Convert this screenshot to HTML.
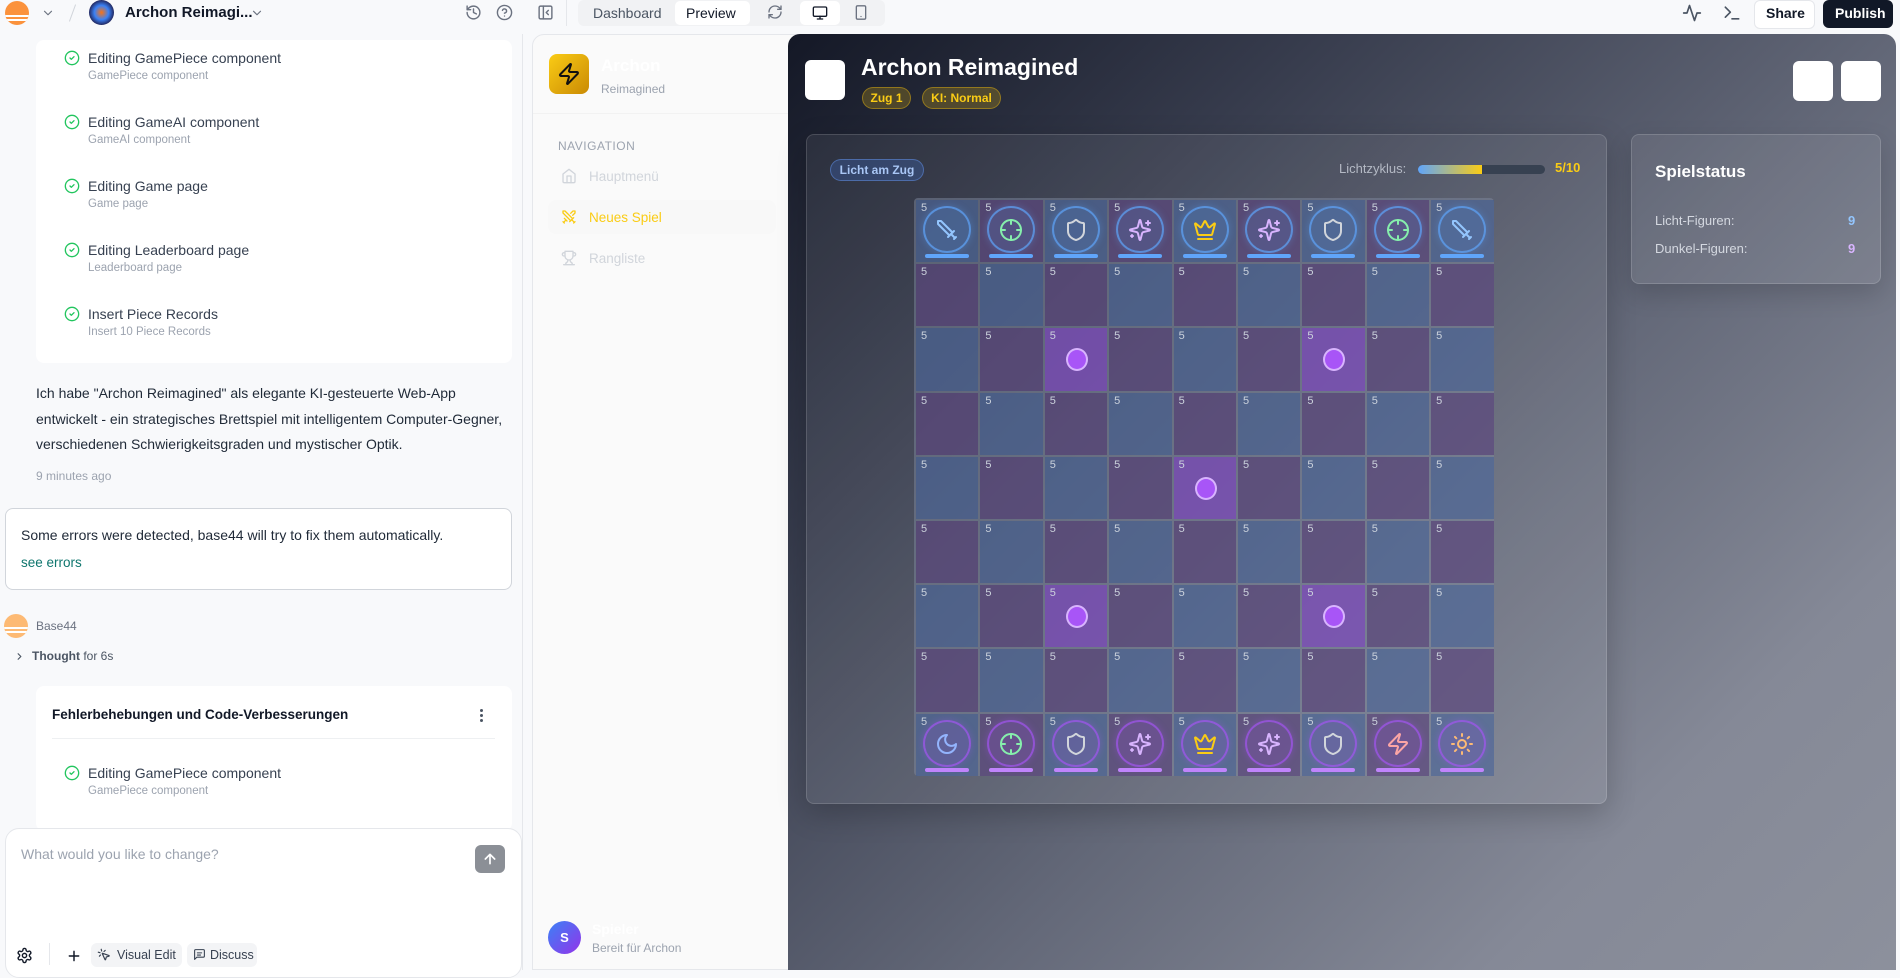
<!DOCTYPE html>
<html><head><meta charset="utf-8">
<style>
*{margin:0;padding:0;box-sizing:border-box}
body{width:1900px;height:970px;overflow:hidden;background:#f8f9fb;font-family:"Liberation Sans",sans-serif;position:relative;color:#1f2937}
.a{position:absolute}
svg{display:block}
.t{position:absolute;white-space:nowrap}
.item .t1{font-size:14px;color:#374151}
.item .t2{font-size:11.5px;color:#9ca3af}
.ic{fill:none;stroke-linecap:round;stroke-linejoin:round}
#game{left:788px;top:34px;width:1108px;height:936px;border-radius:12px 12px 0 0;background:linear-gradient(135deg,#141826 0%,#363b4c 25%,#636878 55%,#858997 80%,#8c909c 100%);overflow:hidden}
.board{position:absolute;left:914px;top:198px;width:580px;height:578px;background:rgba(125,135,158,.5);border-radius:4px;display:grid;grid-template-columns:repeat(9,62.4px);grid-template-rows:repeat(9,62.2px);gap:2px;padding:2px}
.c{position:relative;font-size:11px;color:#cbd2dc;padding:2px 0 0 5px;line-height:13px}
.b{background:rgba(35,75,150,.36)}
.p{background:rgba(70,28,105,.42)}
.h{background:rgba(125,55,200,.55)}
.dot{position:absolute;left:21px;top:20px;width:22px;height:23px;border-radius:50%;background:#a855f7;border:2px solid #d8b4fe}
.pc{position:absolute;left:7px;top:6px;width:48px;height:47px;border-radius:50%;border:2px solid rgba(96,165,250,.7);background:rgba(80,130,200,.2);box-shadow:0 0 8px rgba(96,165,250,.3)}
.pc svg{position:absolute;left:10px;top:10px}
.bar{position:absolute;left:9px;top:54px;width:44px;height:4px;border-radius:2px;background:#60a5fa}
.dk .pc{border-color:rgba(168,85,247,.65);background:rgba(140,80,200,.22);box-shadow:0 0 8px rgba(168,85,247,.3)}
.dk .bar{background:#c084fc}
</style></head><body>

<!-- top bar -->
<div class="a" style="left:5px;top:1px;width:24px;height:24px;border-radius:50%;overflow:hidden;background:#fb923c">
<div class="a" style="left:0;top:14px;width:24px;height:2px;background:#fff"></div><div class="a" style="left:0;top:18px;width:24px;height:2px;background:#fff"></div></div>
<svg class="a ic" style="left:41px;top:6px" width="14" height="14" viewBox="0 0 24 24" stroke="#6b7280" stroke-width="2"><path d="m6 9 6 6 6-6"/></svg>
<div class="a" style="left:72px;top:4px;width:1px;height:18px;background:#d1d5db;transform:rotate(20deg)"></div>
<div class="a" style="left:89px;top:0;width:25px;height:25px;border-radius:50%;background:radial-gradient(circle,#f97316 0%,#3b82f6 40%,#1e1b4b 75%)"></div>
<div class="t" style="left:125px;top:4px;font-size:15px;font-weight:bold;color:#111827">Archon Reimagi...</div>
<svg class="a ic" style="left:250px;top:6px" width="14" height="14" viewBox="0 0 24 24" stroke="#6b7280" stroke-width="2"><path d="m6 9 6 6 6-6"/></svg>
<svg class="a ic" style="left:465px;top:4px" width="17" height="17" viewBox="0 0 24 24" stroke="#6b7280" stroke-width="2"><path d="M3 12a9 9 0 1 0 9-9 9.75 9.75 0 0 0-6.74 2.74L3 8"/><path d="M3 3v5h5"/><path d="M12 7v5l4 2"/></svg>
<svg class="a ic" style="left:496px;top:4px" width="17" height="17" viewBox="0 0 24 24" stroke="#6b7280" stroke-width="2"><circle cx="12" cy="12" r="10"/><path d="M9.09 9a3 3 0 0 1 5.83 1c0 2-3 3-3 3"/><path d="M12 17h.01"/></svg>
<svg class="a ic" style="left:537px;top:4px" width="17" height="17" viewBox="0 0 24 24" stroke="#6b7280" stroke-width="2"><rect x="3" y="3" width="18" height="18" rx="2"/><path d="M9 3v18"/><path d="m16 15-3-3 3-3"/></svg>
<div class="a" style="left:566px;top:0;width:1px;height:26px;background:#e5e7eb"></div>
<div class="a" style="left:578px;top:0;width:307px;height:26px;background:#f1f2f4;border-radius:6px"></div>
<div class="t" style="left:593px;top:5px;font-size:14px;color:#4b5563">Dashboard</div>
<div class="a" style="left:675px;top:1px;width:75px;height:24px;background:#fff;border-radius:5px"></div>
<div class="t" style="left:686px;top:5px;font-size:14px;color:#111827;font-weight:500">Preview</div>
<svg class="a ic" style="left:767px;top:4px" width="16" height="16" viewBox="0 0 24 24" stroke="#6b7280" stroke-width="2"><path d="M3 12a9 9 0 0 1 9-9 9.75 9.75 0 0 1 6.74 2.74L21 8"/><path d="M21 3v5h-5"/><path d="M21 12a9 9 0 0 1-9 9 9.75 9.75 0 0 1-6.74-2.74L3 16"/><path d="M8 16H3v5"/></svg>
<div class="a" style="left:800px;top:1px;width:40px;height:24px;background:#fff;border-radius:5px"></div>
<svg class="a ic" style="left:812px;top:5px" width="16" height="16" viewBox="0 0 24 24" stroke="#111827" stroke-width="2"><rect x="2" y="3" width="20" height="14" rx="2"/><path d="M8 21h8M12 17v4"/></svg>
<svg class="a ic" style="left:853px;top:4px" width="16" height="17" viewBox="0 0 24 24" stroke="#6b7280" stroke-width="2"><rect x="5" y="2" width="14" height="20" rx="2"/><path d="M12 18h.01"/></svg>
<svg class="a ic" style="left:1682px;top:3px" width="20" height="20" viewBox="0 0 24 24" stroke="#4b5563" stroke-width="2"><path d="M22 12h-4l-3 9L9 3l-3 9H2"/></svg>
<svg class="a ic" style="left:1722px;top:3px" width="20" height="20" viewBox="0 0 24 24" stroke="#4b5563" stroke-width="2"><path d="m4 17 6-6-6-6"/><path d="M12 19h8"/></svg>
<div class="a" style="left:1754px;top:0;width:61px;height:29px;background:#fff;border:1px solid #e5e7eb;border-radius:6px"></div>
<div class="t" style="left:1766px;top:5px;font-size:14px;font-weight:bold;color:#111827">Share</div>
<div class="a" style="left:1823px;top:0;width:70px;height:28px;background:#111827;border-radius:6px"></div>
<div class="t" style="left:1835px;top:5px;font-size:14px;font-weight:bold;color:#fff">Publish</div>

<!-- left panel -->
<div class="a" style="left:522px;top:34px;width:1px;height:936px;background:#e5e7eb"></div>
<div class="a" style="left:36px;top:40px;width:476px;height:323px;background:#fff;border-radius:8px"></div>
<div class="item">
<svg class="a ic" style="left:64px;top:50px" width="16" height="16" viewBox="0 0 24 24" stroke="#22c55e" stroke-width="2"><circle cx="12" cy="12" r="10"/><path d="m9 12 2 2 4-4"/></svg>
<div class="t t1" style="left:88px;top:50px">Editing GamePiece component</div><div class="t t2" style="left:88px;top:70px">GamePiece component</div>
<svg class="a ic" style="left:64px;top:114px" width="16" height="16" viewBox="0 0 24 24" stroke="#22c55e" stroke-width="2"><circle cx="12" cy="12" r="10"/><path d="m9 12 2 2 4-4"/></svg>
<div class="t t1" style="left:88px;top:114px">Editing GameAI component</div><div class="t t2" style="left:88px;top:134px">GameAI component</div>
<svg class="a ic" style="left:64px;top:178px" width="16" height="16" viewBox="0 0 24 24" stroke="#22c55e" stroke-width="2"><circle cx="12" cy="12" r="10"/><path d="m9 12 2 2 4-4"/></svg>
<div class="t t1" style="left:88px;top:178px">Editing Game page</div><div class="t t2" style="left:88px;top:198px">Game page</div>
<svg class="a ic" style="left:64px;top:242px" width="16" height="16" viewBox="0 0 24 24" stroke="#22c55e" stroke-width="2"><circle cx="12" cy="12" r="10"/><path d="m9 12 2 2 4-4"/></svg>
<div class="t t1" style="left:88px;top:242px">Editing Leaderboard page</div><div class="t t2" style="left:88px;top:262px">Leaderboard page</div>
<svg class="a ic" style="left:64px;top:306px" width="16" height="16" viewBox="0 0 24 24" stroke="#22c55e" stroke-width="2"><circle cx="12" cy="12" r="10"/><path d="m9 12 2 2 4-4"/></svg>
<div class="t t1" style="left:88px;top:306px">Insert Piece Records</div><div class="t t2" style="left:88px;top:326px">Insert 10 Piece Records</div>
</div>
<div class="a" style="left:36px;top:381px;width:480px;font-size:14px;line-height:25.5px;color:#1f2937">Ich habe "Archon Reimagined" als elegante KI-gesteuerte Web-App entwickelt - ein strategisches Brettspiel mit intelligentem Computer-Gegner, verschiedenen Schwierigkeitsgraden und mystischer Optik.</div>
<div class="t" style="left:36px;top:469px;font-size:12px;color:#9ca3af">9 minutes ago</div>
<div class="a" style="left:5px;top:508px;width:507px;height:82px;background:#fff;border:1px solid #d1d5db;border-radius:8px"></div>
<div class="t" style="left:21px;top:527px;font-size:14px;color:#1f2937">Some errors were detected, base44 will try to fix them automatically.</div>
<div class="t" style="left:21px;top:555px;font-size:13.5px;color:#0f766e">see errors</div>
<div class="a" style="left:4px;top:614px;width:24px;height:24px;border-radius:50%;overflow:hidden;background:#fdba74"><div class="a" style="left:0;top:13px;width:24px;height:1.5px;background:#fff"></div><div class="a" style="left:0;top:17px;width:24px;height:1.5px;background:#fff"></div></div>
<div class="t" style="left:36px;top:619px;font-size:12px;color:#6b7280">Base44</div>
<svg class="a ic" style="left:14px;top:651px" width="11" height="11" viewBox="0 0 24 24" stroke="#4b5563" stroke-width="2.5"><path d="m9 18 6-6-6-6"/></svg>
<div class="t" style="left:32px;top:649px;font-size:12px;color:#4b5563"><b>Thought</b> for 6s</div>
<div class="a" style="left:36px;top:686px;width:476px;height:145px;background:#fff;border-radius:8px"></div>
<div class="t" style="left:52px;top:707px;font-size:13.5px;font-weight:bold;color:#111827">Fehlerbehebungen und Code-Verbesserungen</div>
<div class="a" style="left:480px;top:709px;width:3px;height:3px;border-radius:50%;background:#4b5563;box-shadow:0 5px 0 #4b5563,0 10px 0 #4b5563"></div>
<div class="a" style="left:52px;top:738px;width:443px;height:1px;background:#eef0f2"></div>
<div class="item">
<svg class="a ic" style="left:64px;top:765px" width="16" height="16" viewBox="0 0 24 24" stroke="#22c55e" stroke-width="2"><circle cx="12" cy="12" r="10"/><path d="m9 12 2 2 4-4"/></svg>
<div class="t t1" style="left:88px;top:765px">Editing GamePiece component</div><div class="t t2" style="left:88px;top:785px">GamePiece component</div></div>
<div class="a" style="left:5px;top:828px;width:517px;height:150px;background:#fff;border:1px solid #e5e7eb;border-radius:14px"></div>
<div class="t" style="left:21px;top:846px;font-size:14px;color:#9ca3af">What would you like to change?</div>
<div class="a" style="left:475px;top:845px;width:30px;height:28px;border-radius:6px;background:#8b8f96"></div>
<svg class="a ic" style="left:482px;top:851px" width="16" height="16" viewBox="0 0 24 24" stroke="#fff" stroke-width="2.5"><path d="m5 12 7-7 7 7M12 19V5"/></svg>
<svg class="a ic" style="left:16px;top:947px" width="17" height="17" viewBox="0 0 24 24" stroke="#111827" stroke-width="2"><path d="M12.22 2h-.44a2 2 0 0 0-2 2v.18a2 2 0 0 1-1 1.730l-.43.25a2 2 0 0 1-2 0l-.15-.08a2 2 0 0 0-2.73.73l-.22.38a2 2 0 0 0 .73 2.73l.15.1a2 2 0 0 1 1 1.72v.51a2 2 0 0 1-1 1.74l-.15.09a2 2 0 0 0-.73 2.73l.22.38a2 2 0 0 0 2.73.73l.15-.08a2 2 0 0 1 2 0l.43.25a2 2 0 0 1 1 1.73V20a2 2 0 0 0 2 2h.44a2 2 0 0 0 2-2v-.18a2 2 0 0 1 1-1.73l.43-.25a2 2 0 0 1 2 0l.15.08a2 2 0 0 0 2.73-.73l.22-.39a2 2 0 0 0-.73-2.73l-.15-.08a2 2 0 0 1-1-1.74v-.5a2 2 0 0 1 1-1.74l.15-.09a2 2 0 0 0 .73-2.73l-.22-.38a2 2 0 0 0-2.73-.73l-.15.08a2 2 0 0 1-2 0l-.43-.25a2 2 0 0 1-1-1.73V4a2 2 0 0 0-2-2z"/><circle cx="12" cy="12" r="3"/></svg>
<div class="a" style="left:49px;top:943px;width:1px;height:22px;background:#e5e7eb"></div>
<svg class="a ic" style="left:66px;top:948px" width="16" height="16" viewBox="0 0 24 24" stroke="#111827" stroke-width="2.2"><path d="M5 12h14M12 5v14"/></svg>
<div class="a" style="left:91px;top:943px;width:91px;height:24px;background:#f3f4f6;border-radius:6px"></div>
<svg class="a ic" style="left:97px;top:948px" width="14" height="14" viewBox="0 0 24 24" stroke="#374151" stroke-width="2"><path d="M14 4.1 12 6M5.1 8l-2.9-.8M6 12l-1.9 2M7.2 2.2 8 5.1"/><path d="M9.04 9.65a.5.5 0 0 1 .61-.61l11 4a.5.5 0 0 1-.04.95l-4.6 1.3-1.3 4.6a.5.5 0 0 1-.95.04z"/></svg>
<div class="t" style="left:117px;top:948px;font-size:12.5px;color:#374151">Visual Edit</div>
<div class="a" style="left:187px;top:943px;width:70px;height:24px;background:#f3f4f6;border-radius:6px"></div>
<svg class="a ic" style="left:193px;top:948px" width="13" height="13" viewBox="0 0 24 24" stroke="#374151" stroke-width="2"><path d="M21 15a2 2 0 0 1-2 2H7l-4 4V5a2 2 0 0 1 2-2h14a2 2 0 0 1 2 2z"/><path d="M8 9h8M8 13h6"/></svg>
<div class="t" style="left:210px;top:948px;font-size:12.5px;color:#374151">Discuss</div>

<!-- app sidebar -->
<div class="a" style="left:532px;top:34px;width:270px;height:936px;background:#fafafa;border:1px solid #e5e7eb;border-radius:12px 0 0 0"></div>
<div class="a" style="left:549px;top:54px;width:40px;height:40px;border-radius:8px;background:linear-gradient(135deg,#facc15,#ca8a04)"></div>
<svg class="a ic" style="left:557px;top:62px" width="24" height="24" viewBox="0 0 24 24" stroke="#111" stroke-width="2"><path d="M4 14a1 1 0 0 1-.78-1.63l9.9-10.2a.5.5 0 0 1 .86.46l-1.92 6.02A1 1 0 0 0 13 10h7a1 1 0 0 1 .78 1.63l-9.9 10.2a.5.5 0 0 1-.86-.46l1.92-6.020A1 1 0 0 0 11 14z"/></svg>
<div class="t" style="left:601px;top:56px;font-size:17px;font-weight:bold;color:#fff">Archon</div>
<div class="t" style="left:601px;top:82px;font-size:12px;color:#9ca3af">Reimagined</div>
<div class="a" style="left:533px;top:113px;width:258px;height:1px;background:#f2f2f2"></div>
<div class="t" style="left:558px;top:139px;font-size:12px;letter-spacing:.5px;color:#9ca3af">NAVIGATION</div>
<svg class="a ic" style="left:561px;top:168px" width="16" height="16" viewBox="0 0 24 24" stroke="#d1d5db" stroke-width="2"><path d="m3 9 9-7 9 7v11a2 2 0 0 1-2 2H5a2 2 0 0 1-2-2z"/><path d="M9 22V12h6v10"/></svg>
<div class="t" style="left:589px;top:169px;font-size:13.5px;color:#d1d5db">Hauptmenü</div>
<div class="a" style="left:548px;top:200px;width:228px;height:34px;border-radius:8px;background:#f8f8f8"></div>
<svg class="a ic" style="left:561px;top:209px" width="16" height="16" viewBox="0 0 24 24" stroke="#facc15" stroke-width="2"><polyline points="14.5 17.5 3 6 3 3 6 3 17.5 14.5"/><line x1="13" x2="19" y1="19" y2="13"/><line x1="16" x2="20" y1="16" y2="20"/><line x1="19" x2="21" y1="21" y2="19"/><polyline points="14.5 6.5 18 3 21 3 21 6 17.5 9.5"/><line x1="5" x2="9" y1="14" y2="18"/><line x1="7" x2="4" y1="17" y2="20"/><line x1="3" x2="5" y1="19" y2="21"/></svg>
<div class="t" style="left:589px;top:210px;font-size:13.5px;color:#facc15">Neues Spiel</div>
<svg class="a ic" style="left:561px;top:250px" width="16" height="16" viewBox="0 0 24 24" stroke="#d1d5db" stroke-width="2"><path d="M6 9H4.5a2.5 2.5 0 0 1 0-5H6M18 9h1.5a2.5 2.5 0 0 0 0-5H18M4 22h16M10 14.66V17c0 .55-.47.98-.97 1.21C7.85 18.75 7 20.24 7 22M14 14.66V17c0 .55.47.98.97 1.21C16.150 18.75 17 20.24 17 22M18 2H6v7a6 6 0 0 0 12 0V2Z"/></svg>
<div class="t" style="left:589px;top:251px;font-size:13.5px;color:#d1d5db">Rangliste</div>
<div class="a" style="left:548px;top:921px;width:33px;height:33px;border-radius:50%;background:linear-gradient(135deg,#3b82f6,#9333ea);color:#fff;font-size:13px;font-weight:bold;text-align:center;line-height:33px">S</div>
<div class="t" style="left:592px;top:921px;font-size:14px;font-weight:bold;color:#fff">Spieler</div>
<div class="t" style="left:592px;top:941px;font-size:12px;color:#9ca3af">Bereit für Archon</div>

<!-- game -->
<div class="a" id="game"></div>
<div class="a" style="left:805px;top:60px;width:40px;height:40px;border-radius:6px;background:#fff"></div>
<div class="t" style="left:861px;top:54px;font-size:23px;font-weight:bold;color:#fff">Archon Reimagined</div>
<div class="a" style="left:862px;top:87px;width:49px;height:22px;border-radius:11px;background:rgba(202,160,20,.28);border:1px solid rgba(202,160,20,.55);color:#facc15;font-size:12px;font-weight:bold;text-align:center;line-height:20px">Zug 1</div>
<div class="a" style="left:922px;top:87px;width:79px;height:22px;border-radius:11px;background:rgba(202,160,20,.28);border:1px solid rgba(202,160,20,.55);color:#facc15;font-size:12px;font-weight:bold;text-align:center;line-height:20px">KI: Normal</div>
<div class="a" style="left:1793px;top:61px;width:40px;height:40px;border-radius:6px;background:#fff"></div>
<div class="a" style="left:1841px;top:61px;width:40px;height:40px;border-radius:6px;background:#fff"></div>

<div class="a" style="left:806px;top:134px;width:801px;height:670px;border-radius:8px;background:rgba(255,255,255,.07);border:1px solid rgba(255,255,255,.14);box-shadow:0 10px 30px rgba(0,0,0,.2)"></div>
<div class="a" style="left:830px;top:159px;width:94px;height:22px;border-radius:11px;background:rgba(59,100,180,.35);border:1px solid rgba(96,140,220,.55);color:#a9c6f5;font-size:12px;font-weight:bold;text-align:center;line-height:20px">Licht am Zug</div>
<div class="t" style="left:1339px;top:161px;font-size:13px;color:#b4b9c4">Lichtzyklus:</div>
<div class="a" style="left:1418px;top:165px;width:127px;height:9px;border-radius:5px;background:#374151;overflow:hidden"><div style="width:64px;height:9px;background:linear-gradient(90deg,#60a5fa,#facc15)"></div></div>
<div class="t" style="left:1555px;top:160px;font-size:13px;font-weight:bold;color:#facc15">5/10</div>

<div class="a" style="left:1631px;top:134px;width:250px;height:150px;border-radius:8px;background:rgba(255,255,255,.08);border:1px solid rgba(255,255,255,.15);box-shadow:0 10px 25px rgba(0,0,0,.15)"></div>
<div class="t" style="left:1655px;top:162px;font-size:17px;font-weight:bold;color:#fff">Spielstatus</div>
<div class="t" style="left:1655px;top:213px;font-size:13px;color:#d4d8e0">Licht-Figuren:</div>
<div class="t" style="left:1848px;top:213px;font-size:13px;font-weight:bold;color:#93c5fd">9</div>
<div class="t" style="left:1655px;top:241px;font-size:13px;color:#d4d8e0">Dunkel-Figuren:</div>
<div class="t" style="left:1848px;top:241px;font-size:13px;font-weight:bold;color:#d8b4fe">9</div>

<div class="board">
<!-- row 0 -->
<div class="c b">5<div class="pc"><svg class="ic" width="24" height="24" viewBox="0 0 24 24" stroke="#93c5fd" stroke-width="2"><polyline points="14.5 17.5 3 6 3 3 6 3 17.5 14.5"/><line x1="13" x2="19" y1="19" y2="13"/><line x1="16" x2="20" y1="16" y2="20"/><line x1="19" x2="21" y1="21" y2="19"/></svg></div><div class="bar"></div></div>
<div class="c p">5<div class="pc"><svg class="ic" width="24" height="24" viewBox="0 0 24 24" stroke="#86efac" stroke-width="2"><circle cx="12" cy="12" r="10"/><path d="M22 12h-4M6 12H2M12 6V2M12 22v-4"/></svg></div><div class="bar"></div></div>
<div class="c b">5<div class="pc"><svg class="ic" width="24" height="24" viewBox="0 0 24 24" stroke="#d1d5db" stroke-width="2"><path d="M20 13c0 5-3.5 7.5-7.66 8.95a1 1 0 0 1-.67-.01C7.5 20.5 4 18 4 13V6a1 1 0 0 1 1-1c2 0 4.5-1.2 6.24-2.72a1.17 1.17 0 0 1 1.52 0C14.51 3.81 17 5 19 5a1 1 0 0 1 1 1z"/></svg></div><div class="bar"></div></div>
<div class="c p">5<div class="pc"><svg class="ic" width="24" height="24" viewBox="0 0 24 24" stroke="#d8b4fe" stroke-width="2"><path d="M9.937 15.5A2 2 0 0 0 8.5 14.063l-6.135-1.582a.5.5 0 0 1 0-.962L8.5 9.936A2 2 0 0 0 9.937 8.5l1.582-6.135a.5.5 0 0 1 .963 0L14.063 8.5A2 2 0 0 0 15.5 9.937l6.135 1.581a.5.5 0 0 1 0 .964L15.5 14.063a2 2 0 0 0-1.437 1.437l-1.582 6.135a.5.5 0 0 1-.963 0z"/><path d="M20 3v4M22 5h-4M4 17v2M5 18H3"/></svg></div><div class="bar"></div></div>
<div class="c b">5<div class="pc"><svg class="ic" width="24" height="24" viewBox="0 0 24 24" stroke="#facc15" stroke-width="2"><path d="M11.562 3.266a.5.5 0 0 1 .876 0L15.39 8.87a1 1 0 0 0 1.516.294L21.183 5.5a.5.5 0 0 1 .798.519l-2.834 10.246a1 1 0 0 1-.956.734H5.81a1 1 0 0 1-.957-.734L2.02 6.02a.5.5 0 0 1 .798-.519l4.276 3.664a1 1 0 0 0 1.516-.294z"/><path d="M5 21h14"/></svg></div><div class="bar"></div></div>
<div class="c p">5<div class="pc"><svg class="ic" width="24" height="24" viewBox="0 0 24 24" stroke="#d8b4fe" stroke-width="2"><path d="M9.937 15.5A2 2 0 0 0 8.5 14.063l-6.135-1.582a.5.5 0 0 1 0-.962L8.5 9.936A2 2 0 0 0 9.937 8.5l1.582-6.135a.5.5 0 0 1 .963 0L14.063 8.5A2 2 0 0 0 15.5 9.937l6.135 1.581a.5.5 0 0 1 0 .964L15.5 14.063a2 2 0 0 0-1.437 1.437l-1.582 6.135a.5.5 0 0 1-.963 0z"/><path d="M20 3v4M22 5h-4M4 17v2M5 18H3"/></svg></div><div class="bar"></div></div>
<div class="c b">5<div class="pc"><svg class="ic" width="24" height="24" viewBox="0 0 24 24" stroke="#d1d5db" stroke-width="2"><path d="M20 13c0 5-3.5 7.5-7.66 8.95a1 1 0 0 1-.67-.01C7.5 20.5 4 18 4 13V6a1 1 0 0 1 1-1c2 0 4.5-1.2 6.24-2.72a1.17 1.17 0 0 1 1.52 0C14.51 3.81 17 5 19 5a1 1 0 0 1 1 1z"/></svg></div><div class="bar"></div></div>
<div class="c p">5<div class="pc"><svg class="ic" width="24" height="24" viewBox="0 0 24 24" stroke="#86efac" stroke-width="2"><circle cx="12" cy="12" r="10"/><path d="M22 12h-4M6 12H2M12 6V2M12 22v-4"/></svg></div><div class="bar"></div></div>
<div class="c b">5<div class="pc"><svg class="ic" width="24" height="24" viewBox="0 0 24 24" stroke="#93c5fd" stroke-width="2"><polyline points="14.5 17.5 3 6 3 3 6 3 17.5 14.5"/><line x1="13" x2="19" y1="19" y2="13"/><line x1="16" x2="20" y1="16" y2="20"/><line x1="19" x2="21" y1="21" y2="19"/></svg></div><div class="bar"></div></div>
<!-- row 1 -->
<div class="c p">5</div><div class="c b">5</div><div class="c p">5</div><div class="c b">5</div><div class="c p">5</div><div class="c b">5</div><div class="c p">5</div><div class="c b">5</div><div class="c p">5</div>
<!-- row 2 -->
<div class="c b">5</div><div class="c p">5</div><div class="c h">5<div class="dot"></div></div><div class="c p">5</div><div class="c b">5</div><div class="c p">5</div><div class="c h">5<div class="dot"></div></div><div class="c p">5</div><div class="c b">5</div>
<!-- row 3 -->
<div class="c p">5</div><div class="c b">5</div><div class="c p">5</div><div class="c b">5</div><div class="c p">5</div><div class="c b">5</div><div class="c p">5</div><div class="c b">5</div><div class="c p">5</div>
<!-- row 4 -->
<div class="c b">5</div><div class="c p">5</div><div class="c b">5</div><div class="c p">5</div><div class="c h">5<div class="dot"></div></div><div class="c p">5</div><div class="c b">5</div><div class="c p">5</div><div class="c b">5</div>
<!-- row 5 -->
<div class="c p">5</div><div class="c b">5</div><div class="c p">5</div><div class="c b">5</div><div class="c p">5</div><div class="c b">5</div><div class="c p">5</div><div class="c b">5</div><div class="c p">5</div>
<!-- row 6 -->
<div class="c b">5</div><div class="c p">5</div><div class="c h">5<div class="dot"></div></div><div class="c p">5</div><div class="c b">5</div><div class="c p">5</div><div class="c h">5<div class="dot"></div></div><div class="c p">5</div><div class="c b">5</div>
<!-- row 7 -->
<div class="c p">5</div><div class="c b">5</div><div class="c p">5</div><div class="c b">5</div><div class="c p">5</div><div class="c b">5</div><div class="c p">5</div><div class="c b">5</div><div class="c p">5</div>
<!-- row 8 -->
<div class="c b dk">5<div class="pc"><svg class="ic" width="24" height="24" viewBox="0 0 24 24" stroke="#93b4fd" stroke-width="2"><path d="M12 3a6 6 0 0 0 9 9 9 9 0 1 1-9-9Z"/></svg></div><div class="bar"></div></div>
<div class="c p dk">5<div class="pc"><svg class="ic" width="24" height="24" viewBox="0 0 24 24" stroke="#86efac" stroke-width="2"><circle cx="12" cy="12" r="10"/><path d="M22 12h-4M6 12H2M12 6V2M12 22v-4"/></svg></div><div class="bar"></div></div>
<div class="c b dk">5<div class="pc"><svg class="ic" width="24" height="24" viewBox="0 0 24 24" stroke="#d1d5db" stroke-width="2"><path d="M20 13c0 5-3.5 7.5-7.66 8.95a1 1 0 0 1-.67-.01C7.5 20.5 4 18 4 13V6a1 1 0 0 1 1-1c2 0 4.5-1.2 6.24-2.72a1.17 1.17 0 0 1 1.52 0C14.51 3.81 17 5 19 5a1 1 0 0 1 1 1z"/></svg></div><div class="bar"></div></div>
<div class="c p dk">5<div class="pc"><svg class="ic" width="24" height="24" viewBox="0 0 24 24" stroke="#d8b4fe" stroke-width="2"><path d="M9.937 15.5A2 2 0 0 0 8.5 14.063l-6.135-1.582a.5.5 0 0 1 0-.962L8.5 9.936A2 2 0 0 0 9.937 8.5l1.582-6.135a.5.5 0 0 1 .963 0L14.063 8.5A2 2 0 0 0 15.5 9.937l6.135 1.581a.5.5 0 0 1 0 .964L15.5 14.063a2 2 0 0 0-1.437 1.437l-1.582 6.135a.5.5 0 0 1-.963 0z"/><path d="M20 3v4M22 5h-4M4 17v2M5 18H3"/></svg></div><div class="bar"></div></div>
<div class="c b dk">5<div class="pc"><svg class="ic" width="24" height="24" viewBox="0 0 24 24" stroke="#facc15" stroke-width="2"><path d="M11.562 3.266a.5.5 0 0 1 .876 0L15.39 8.87a1 1 0 0 0 1.516.294L21.183 5.5a.5.5 0 0 1 .798.519l-2.834 10.246a1 1 0 0 1-.956.734H5.81a1 1 0 0 1-.957-.734L2.02 6.02a.5.5 0 0 1 .798-.519l4.276 3.664a1 1 0 0 0 1.516-.294z"/><path d="M5 21h14"/></svg></div><div class="bar"></div></div>
<div class="c p dk">5<div class="pc"><svg class="ic" width="24" height="24" viewBox="0 0 24 24" stroke="#d8b4fe" stroke-width="2"><path d="M9.937 15.5A2 2 0 0 0 8.5 14.063l-6.135-1.582a.5.5 0 0 1 0-.962L8.5 9.936A2 2 0 0 0 9.937 8.5l1.582-6.135a.5.5 0 0 1 .963 0L14.063 8.5A2 2 0 0 0 15.5 9.937l6.135 1.581a.5.5 0 0 1 0 .964L15.5 14.063a2 2 0 0 0-1.437 1.437l-1.582 6.135a.5.5 0 0 1-.963 0z"/><path d="M20 3v4M22 5h-4M4 17v2M5 18H3"/></svg></div><div class="bar"></div></div>
<div class="c b dk">5<div class="pc"><svg class="ic" width="24" height="24" viewBox="0 0 24 24" stroke="#d1d5db" stroke-width="2"><path d="M20 13c0 5-3.5 7.5-7.66 8.95a1 1 0 0 1-.67-.01C7.5 20.5 4 18 4 13V6a1 1 0 0 1 1-1c2 0 4.5-1.2 6.24-2.72a1.17 1.17 0 0 1 1.52 0C14.51 3.81 17 5 19 5a1 1 0 0 1 1 1z"/></svg></div><div class="bar"></div></div>
<div class="c p dk">5<div class="pc"><svg class="ic" width="24" height="24" viewBox="0 0 24 24" stroke="#fca5a5" stroke-width="2"><path d="M4 14a1 1 0 0 1-.78-1.63l9.9-10.2a.5.5 0 0 1 .86.46l-1.92 6.02A1 1 0 0 0 13 10h7a1 1 0 0 1 .78 1.63l-9.9 10.2a.5.5 0 0 1-.86-.46l1.92-6.02A1 1 0 0 0 11 14z"/></svg></div><div class="bar"></div></div>
<div class="c b dk">5<div class="pc"><svg class="ic" width="24" height="24" viewBox="0 0 24 24" stroke="#fdba74" stroke-width="2"><circle cx="12" cy="12" r="4"/><path d="M12 2v2M12 20v2M4.93 4.93l1.41 1.41M17.66 17.66l1.41 1.41M2 12h2M20 12h2M6.34 17.66l-1.41 1.41M19.07 4.93l-1.41 1.41"/></svg></div><div class="bar"></div></div>
</div>
</body></html>
